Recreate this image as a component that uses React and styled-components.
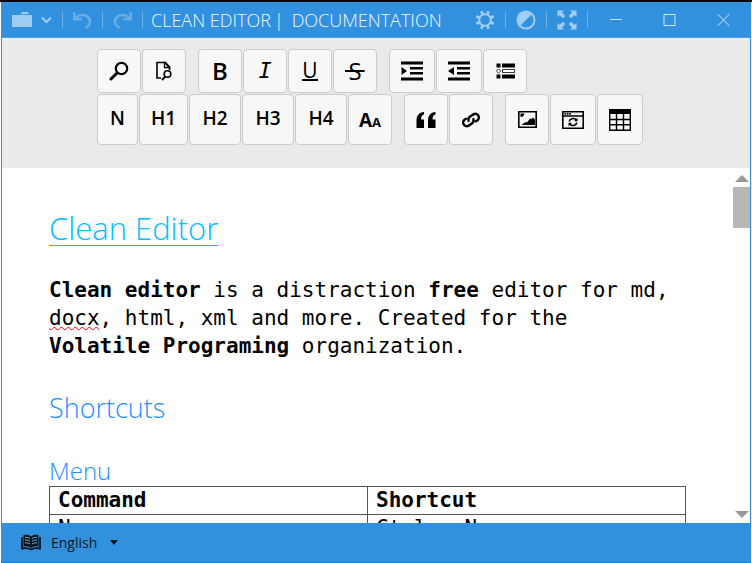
import React from "react";
import styled, { createGlobalStyle } from "styled-components";

const GlobalStyle = createGlobalStyle`
  * {
    box-sizing: border-box;
  }

  body {
    margin: 0;
    background-color: #fff;
    font-family: "Open Sans", "Noto Sans", sans-serif;
  }

  button,
  select {
    margin: 0;
    padding: 0;
    font-family: inherit;
    cursor: pointer;
  }

  svg {
    display: block;
  }
`;

const Window = styled.div`
  display: flex;
  flex-direction: column;
  height: 100vh;
  padding: 0 1px;
  border-top: 2px solid #000;
`;

const TitleBar = styled.header`
  display: flex;
  align-items: center;
  height: 36px;
  padding: 0 21px 0 11px;
  background-color: #3291df;
  border-bottom: 1px solid #4ba1e6;
`;

const BarGroup = styled.div`
  display: flex;
  align-items: center;
  gap: ${({ $gap }) => $gap || "10px"};
`;

const BarButton = styled.button`
  border: none;
  background: none;
  color: ${({ $dim }) => ($dim ? "#68ade6" : "#a0cdf3")};
`;

const Separator = styled.span`
  width: 1px;
  height: 17px;
  background-color: #6db0e8;
`;

const Title = styled.h1`
  flex: 1;
  display: flex;
  gap: 8px;
  margin: 0 0 0 8px;
  color: #f2f8fd;
  font-size: 18px;
  font-weight: 300;
  line-height: 24px;
  white-space: nowrap;
`;

const TitleApp = styled.span`
  display: flex;
  gap: 3px;
`;

const WindowControls = styled(BarGroup)`
  margin-left: 22px;
`;

const Body = styled.div`
  flex: 1;
  display: flex;
  flex-direction: column;
  min-height: 0;
  border: solid #2a8de0;
  border-width: 0 1px;
`;

const Toolbar = styled.div`
  display: flex;
  flex-direction: column;
  gap: 1px;
  padding: 11px 20px 23px 95px;
  background-color: #eaeaea;
`;

const ToolRow = styled.div`
  display: flex;
  gap: 12px;
`;

const ToolGroup = styled.div`
  display: flex;
  gap: 1px;
`;

const ToolButton = styled.button`
  display: flex;
  align-items: center;
  justify-content: center;
  width: ${({ $width }) => $width || 44}px;
  height: ${({ $tall }) => ($tall ? 51 : 44)}px;
  border: 1px solid #cbcbcb;
  border-radius: 4px;
  background-color: #f7f7f7;
  color: #000;

  &:hover {
    background-color: #fff;
  }
`;

const ToolText = styled.span`
  padding-bottom: 3px;
  font-size: 19px;
  font-weight: 600;
  line-height: 24px;
`;

const Glyph = styled.span`
  font-size: 24px;
  line-height: 26px;
`;

const BoldGlyph = styled(Glyph).attrs({ as: "b" })`
  font-weight: 600;
`;

const ItalicGlyph = styled(Glyph).attrs({ as: "i" })`
  font-family: "DejaVu Sans Mono", monospace;
  font-size: 22px;
`;

const UnderlineGlyph = styled(Glyph)`
  border-bottom: 2px solid #000;
  font-size: 21px;
  line-height: 18px;
`;

const StrikeGlyph = styled(Glyph)`
  padding: 0 3px;
  background: linear-gradient(#000, #000) center / 100% 2px no-repeat;
`;

const Main = styled.main`
  flex: 1;
  display: flex;
  min-height: 0;
  background-color: #fff;
`;

const Document = styled.article`
  flex: 1;
  overflow: hidden;
  padding: 38px 47px 0 47px;
  color: #000;
  font-family: "DejaVu Sans Mono", "Liberation Mono", monospace;
  font-size: 21px;
  line-height: 28px;
`;

const DocTitle = styled.h2`
  margin: 0 0 26px;
  font-family: "Open Sans", "Noto Sans", sans-serif;
  font-size: 31px;
  font-weight: 300;
  line-height: 44px;

  a {
    color: #00bfff;
    text-decoration-thickness: 1px;
    text-underline-offset: 5px;
  }
`;

const Paragraph = styled.p`
  margin: 0 0 30px;
  padding-right: 8px;
`;

const Misspelled = styled.span`
  text-decoration: underline wavy #f00 1px;
  text-decoration-skip-ink: none;
`;

const Heading = styled.h3`
  margin: 0 0 30px;
  color: #1e90ff;
  font-family: "Open Sans", "Noto Sans", sans-serif;
  font-size: 27px;
  font-weight: 300;
  line-height: 36px;
`;

const SubHeading = styled(Heading).attrs({ as: "h4" })`
  margin: 0;
  font-size: 24px;
  line-height: 30px;
`;

const Table = styled.table`
  width: 100%;
  border-collapse: collapse;
  table-layout: fixed;

  th,
  td {
    height: 28px;
    padding: 0 8px;
    border: 1px solid #555;
    line-height: 27px;
    text-align: left;
  }
`;

const Scrollbar = styled.div`
  display: flex;
  flex-direction: column;
  width: 17px;
  padding: 7px 0 5px;
`;

const ScrollButton = styled.button`
  display: flex;
  justify-content: center;
  border: none;
  background: none;
  color: #999;
`;

const ScrollTrack = styled.div`
  flex: 1;
  padding-top: 5px;
`;

const ScrollThumb = styled.div`
  height: 12%;
  min-height: 41px;
  background-color: #b7b7b7;
`;

const StatusBar = styled.footer`
  display: flex;
  align-items: center;
  height: 40px;
  padding-left: 20px;
  gap: 10px;
  background-color: #3291df;
  border-bottom: 1px solid #1c82d8;
`;

const LanguageLabel = styled.label`
  display: flex;
  align-items: center;
  gap: 9px;
  color: #0b1720;
`;

const LanguageSelect = styled.select`
  appearance: none;
  width: 50px;
  border: none;
  background: none;
  color: inherit;
  font-size: 14px;
  line-height: 20px;
`;

const BriefcaseIcon = () => (
  <svg width="20" height="15" viewBox="0 0 20 15" fill="currentColor">
    <path d="M0 3h9l1-3h6l1 2v1h3v12H0z" />
    <path d="M10 2.5h7" stroke="#3291df" strokeWidth="1" />
  </svg>
);

const ChevronIcon = () => (
  <svg width="11" height="8" viewBox="0 0 11 8" fill="none">
    <path d="M1 1.5l4.500 4.500L10 1.500" stroke="currentColor" strokeWidth="2" />
  </svg>
);

const UndoIcon = ({ flip }) => (
  <svg width="19" height="18" viewBox="0 0 19 18" fill="none">
    <g
      transform={flip ? "matrix(-1 0 0 1 19 0)" : undefined}
      stroke="currentColor"
      strokeWidth="2.600"
    >
      <path d="M1.300 1v7.300h7.500" />
      <path d="M2 7.800C5 3.800 11.500 2.500 15 6c3.600 3.700 2.200 8.500-2.500 11" />
    </g>
  </svg>
);

const GearIcon = () => (
  <svg width="20" height="20" viewBox="0 0 20 20" fill="none" stroke="currentColor">
    <circle cx="10" cy="10" r="5.800" strokeWidth="2" />
    {[22.5, 67.5, 112.5, 157.5, 202.5, 247.5, 292.5, 337.5].map((angle) => (
      <path
        key={angle}
        d="M10 .5v3.500"
        strokeWidth="2.800"
        transform={`rotate(${angle} 10 10)`}
      />
    ))}
  </svg>
);

const ContrastIcon = () => (
  <svg width="20" height="20" viewBox="0 0 20 20">
    <circle cx="10" cy="10" r="8.500" fill="none" stroke="currentColor" strokeWidth="2" />
    <path d="M16 4A8.500 8.500 0 0 0 4 16z" fill="currentColor" />
  </svg>
);

const ExpandIcon = () => (
  <svg width="20" height="20" viewBox="0 0 20 20">
    {[0, 90, 180, 270].map((angle) => (
      <g key={angle} transform={`rotate(${angle} 10 10)`}>
        <path d="M.5.500h6.500L5 2.500 8.200 5.900 5.900 8.200 2.500 5 .5 7z" fill="currentColor" />
      </g>
    ))}
  </svg>
);

const MinimizeIcon = () => (
  <svg width="12" height="14" viewBox="0 0 12 14">
    <path d="M0 6.500h12" stroke="#cfe6fa" />
  </svg>
);

const MaximizeIcon = () => (
  <svg width="13" height="14" viewBox="0 0 13 14">
    <path d="M1 1.500h11v11H1z" fill="none" stroke="#cfe6fa" />
  </svg>
);

const CloseIcon = () => (
  <svg width="13" height="14" viewBox="0 0 13 14">
    <path d="M.5 1l12 12M12.500 1l-12 12" stroke="#cfe6fa" />
  </svg>
);

const SearchIcon = () => (
  <svg width="20" height="20" viewBox="0 0 20 20" fill="none" stroke="currentColor">
    <circle cx="12.500" cy="7.500" r="5.700" strokeWidth="2.200" />
    <path d="M8 12l-6 6" strokeWidth="3" strokeLinecap="round" />
  </svg>
);

const FindInPageIcon = () => (
  <svg width="18" height="20" viewBox="0 0 18 20" fill="none" stroke="currentColor">
    <path d="M6 17H2V1.500h8.500l4 4.500v3" strokeWidth="1.600" />
    <path d="M9.500 1.500v5h5z" strokeWidth="1.300" />
    <circle cx="12.500" cy="13" r="3.300" strokeWidth="1.600" />
    <path d="M10.200 15.500l-3.200 3.500" strokeWidth="2" />
  </svg>
);

const IndentIcon = ({ left }) => (
  <svg width="22" height="20" viewBox="0 0 22 20" fill="currentColor">
    <path d="M0 .5h22v3H0zM9 6h13v2.500H9zM9 11h13v2.500H9zM0 16.500h22v3H0z" />
    <path d={left ? "M6 6v8L0 10z" : "M.5 6v8l5.500-4z"} />
  </svg>
);

const ListIcon = () => (
  <svg width="19" height="16" viewBox="0 0 19 16" fill="currentColor">
    <path d="M.5.500h4v4h-4zM6 .500h13v4H6zM.5 11.500h4v4h-4zM6 11.500h13v4H6z" />
    <path
      d="M2.500 5.800L4.700 8l-2.200 2.200L.3 8zM6.500 6.500h12v3h-12z"
      fill="#fff"
      stroke="currentColor"
      strokeWidth=".8"
    />
  </svg>
);

const CapsText = styled.span`
  font-size: 19px;
  font-weight: 700;

  small {
    font-size: 13px;
  }
`;

const QuoteIcon = () => (
  <svg width="20" height="16" viewBox="0 0 20 16" fill="currentColor">
    <path d="M8 0v2.500C6 3 5 4.500 5 7.500h3V16H.5V9C.5 3.500 3 .5 8 0zM19.500 0v2.500c-2 .5-3 2-3 5h3V16H12V9c0-5.500 2.500-8.500 7.500-9z" />
  </svg>
);

const LinkIcon = () => (
  <svg width="20" height="16" viewBox="0 0 20 16" fill="none" stroke="currentColor">
    <g transform="rotate(-32 10 8)" strokeWidth="2.400" strokeLinecap="round">
      <path d="M7.500 7.500C8 5.500 9.500 4.500 11.500 4.500H15a3.600 3.600 0 0 1 0 7.200h-1.500" />
      <path d="M12.500 8.500c-.5 2-2 3-4 3H5a3.600 3.600 0 0 1 0-7.200h1.500" />
    </g>
  </svg>
);

const ImageIcon = () => (
  <svg width="19" height="17" viewBox="0 0 19 17">
    <path d="M.8.800h17.400v15.400H.8z" fill="none" stroke="currentColor" strokeWidth="1.600" />
    <path
      d="M2.500 2.500h3.800c0 2-1.500 3.500-3.800 3.500zM3.500 14l4-3 1.500.500 3-4 1.500.500L15 6.500l2 2V14z"
      fill="currentColor"
    />
  </svg>
);

const EmbedIcon = () => (
  <svg width="22" height="18" viewBox="0 0 22 18" fill="none" stroke="currentColor">
    <path d="M.8.800h20.400v16.400H.8zM1 5h20" strokeWidth="1.600" />
    <path d="M2.500 2.900h6.500" strokeWidth="1.800" strokeDasharray="1.600 .8" />
    <path d="M7.200 10.500c.5-3 4.500-4 6.800-1.800M14.800 11.500c-.5 3-4.500 4-6.800 1.800" strokeWidth="1.600" />
    <path d="M15.500 6.800v3.500h-3.500zM6.500 15.200v-3.500H10z" fill="currentColor" stroke="none" />
  </svg>
);

const TableIcon = () => (
  <svg width="22" height="22" viewBox="0 0 22 22">
    <path d="M0 0h22v5H0z" fill="currentColor" />
    <path
      d="M.7 1v20.300h20.600V1M1 10.500h20M1 15.800h20M7.500 5v16M14.500 5v16"
      fill="none"
      stroke="currentColor"
      strokeWidth="1.400"
    />
  </svg>
);

const BookIcon = () => (
  <svg width="20" height="17" viewBox="0 0 20 17">
    <path
      d="M1 3v11.500c3.500-.8 6.500-.5 9 1 2.500-1.500 5.500-1.800 9-1V3"
      fill="none"
      stroke="#07131c"
      strokeWidth="1.800"
    />
    <path d="M2.500 1C6 .3 8.300.8 10 2.500 11.700.8 14 .3 17.500 1v11.500c-3.500-.5-5.800 0-7.500 1.500-1.700-1.500-4-2-7.500-1.500z" fill="#07131c" />
    <path
      d="M4 3.500c2-.3 3.500 0 5 1M4 6.200c2-.3 3.500 0 5 1M4 9c2-.3 3.500 0 5 1M16 3.500c-2-.3-3.500 0-5 1M16 6.200c-2-.3-3.500 0-5 1M16 9c-2-.3-3.500 0-5 1"
      fill="none"
      stroke="#6bb0e8"
    />
  </svg>
);

const Triangle = ({ width, height, up }) => (
  <svg width={width} height={height} viewBox="0 0 14 7" preserveAspectRatio="none">
    <path d={up ? "M0 7h14L7 0z" : "M0 0h14L7 7z"} fill="currentColor" />
  </svg>
);

const TOOLS = [
  [
    [
      { label: "Find", content: <SearchIcon /> },
      { label: "Find in page", content: <FindInPageIcon /> },
    ],
    [
      { label: "Bold", content: <BoldGlyph>B</BoldGlyph> },
      { label: "Italic", content: <ItalicGlyph>I</ItalicGlyph> },
      { label: "Underline", content: <UnderlineGlyph>U</UnderlineGlyph> },
      { label: "Strikethrough", content: <StrikeGlyph>S</StrikeGlyph> },
    ],
    [
      { label: "Indent", width: 46, content: <IndentIcon /> },
      { label: "Outdent", width: 46, content: <IndentIcon left /> },
      { label: "List", content: <ListIcon /> },
    ],
  ],
  [
    [
      { label: "Normal", width: 41, content: <ToolText>N</ToolText> },
      { label: "Heading 1", width: 49, content: <ToolText>H1</ToolText> },
      { label: "Heading 2", width: 52, content: <ToolText>H2</ToolText> },
      { label: "Heading 3", width: 52, content: <ToolText>H3</ToolText> },
      { label: "Heading 4", width: 52, content: <ToolText>H4</ToolText> },
      {
        label: "Font",
        content: (
          <CapsText>
            A<small>A</small>
          </CapsText>
        ),
      },
    ],
    [
      { label: "Quote", content: <QuoteIcon /> },
      { label: "Link", content: <LinkIcon /> },
    ],
    [
      { label: "Image", content: <ImageIcon /> },
      { label: "Embed", width: 46, content: <EmbedIcon /> },
      { label: "Table", width: 46, content: <TableIcon /> },
    ],
  ],
];

export default function App() {
  return (
    <>
      <GlobalStyle />
      <Window>
        <TitleBar>
          <BarGroup>
            <BarGroup $gap="9px">
              <BarButton aria-label="File"><BriefcaseIcon /></BarButton>
              <BarButton aria-label="File menu"><ChevronIcon /></BarButton>
            </BarGroup>
            <Separator />
            <BarButton $dim aria-label="Undo"><UndoIcon /></BarButton>
            <Separator />
            <BarButton $dim aria-label="Redo"><UndoIcon flip /></BarButton>
            <Separator />
          </BarGroup>
          <Title>
            <TitleApp>
              <span>CLEAN EDITOR</span>
              <span>|</span>
            </TitleApp>
            <span>DOCUMENTATION</span>
          </Title>
          <BarGroup>
            <BarButton aria-label="Settings"><GearIcon /></BarButton>
            <Separator />
            <BarButton aria-label="Theme"><ContrastIcon /></BarButton>
            <Separator />
            <BarButton aria-label="Full screen"><ExpandIcon /></BarButton>
            <Separator />
          </BarGroup>
          <WindowControls $gap="41px">
            <BarButton aria-label="Minimize"><MinimizeIcon /></BarButton>
            <BarButton aria-label="Maximize"><MaximizeIcon /></BarButton>
            <BarButton aria-label="Close"><CloseIcon /></BarButton>
          </WindowControls>
        </TitleBar>

        <Body>
          <Toolbar>
            {TOOLS.map((row, rowIndex) => (
              <ToolRow key={rowIndex}>
                {row.map((group, groupIndex) => (
                  <ToolGroup key={groupIndex}>
                    {group.map(({ label, width, content }) => (
                      <ToolButton
                        key={label}
                        aria-label={label}
                        $width={width}
                        $tall={rowIndex === 1}
                      >
                        {content}
                      </ToolButton>
                    ))}
                  </ToolGroup>
                ))}
              </ToolRow>
            ))}
          </Toolbar>

          <Main>
            <Document>
              <DocTitle>
                <a href="#clean-editor">Clean Editor</a>
              </DocTitle>
              <Paragraph>
                <b>Clean editor</b> is a distraction <b>free</b> editor for md,{" "}
                <Misspelled>docx</Misspelled>, html, xml and more. Created for
                the <b>Volatile Programing</b> organization.
              </Paragraph>
              <Heading>Shortcuts</Heading>
              <SubHeading>Menu</SubHeading>
              <Table>
                <thead>
                  <tr>
                    <th>Command</th>
                    <th>Shortcut</th>
                  </tr>
                </thead>
                <tbody>
                  <tr>
                    <td>New</td>
                    <td>Ctrl + N</td>
                  </tr>
                </tbody>
              </Table>
            </Document>
            <Scrollbar>
              <ScrollButton aria-label="Scroll up">
                <Triangle width="14" height="7" up />
              </ScrollButton>
              <ScrollTrack>
                <ScrollThumb />
              </ScrollTrack>
              <ScrollButton aria-label="Scroll down">
                <Triangle width="14" height="7" />
              </ScrollButton>
            </Scrollbar>
          </Main>
        </Body>

        <StatusBar>
          <BookIcon />
          <LanguageLabel>
            <LanguageSelect aria-label="Language" defaultValue="en">
              <option value="en">English</option>
            </LanguageSelect>
            <Triangle width="8" height="5" />
          </LanguageLabel>
        </StatusBar>
      </Window>
    </>
  );
}
